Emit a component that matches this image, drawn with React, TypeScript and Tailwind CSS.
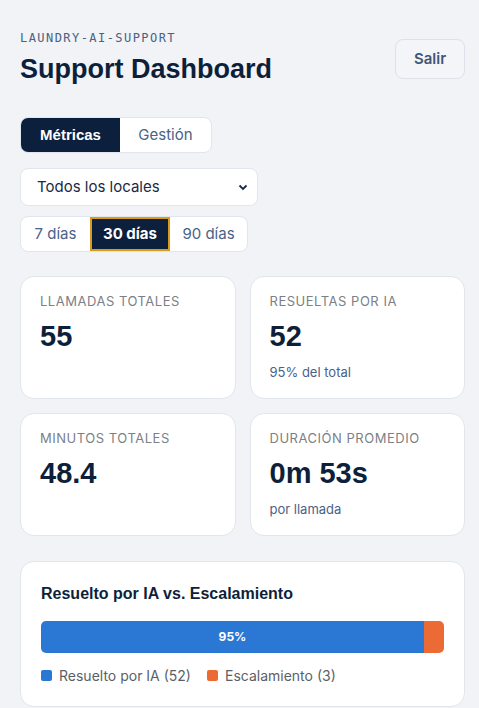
const sans = "font-['Inter','Liberation_Sans',sans-serif]";

interface StatProps {
  label: string;
  value: string;
  sub?: string;
}

const StatCard = ({ label, value, sub }: StatProps) => (
  <div className="bg-white border border-[#e1e5ec] rounded-[14px] h-[123px] px-[19px] pt-[15px]">
    <div className="text-[13px] tracking-[0.04em] text-[#7b7f86] uppercase">{label}</div>
    <div className="mt-[8px] text-[29px] leading-[32px] font-bold text-[#0e1f3a] font-['Liberation_Sans',sans-serif]">{value}</div>
    {sub && <div className="mt-[11px] text-[13px] text-[#4a6287]">{sub}</div>}
  </div>
);

const App = () => {
  return (
    <div className={`min-h-[708px] bg-[#f1f3f7] pl-[20px] pr-[14px] pt-[30px] ${sans}`}>
      <div className="flex justify-between items-start">
        <div>
          <div className="text-[12px] tracking-[0.12em] text-[#4a6180] font-['DejaVu_Sans_Mono',monospace] leading-[16px]">
            LAUNDRY-AI-SUPPORT
          </div>
          <h1 className="mt-[7px] text-[27px] leading-[32px] font-bold text-[#0e1f3a] font-['Liberation_Sans',sans-serif]">
            Support Dashboard
          </h1>
        </div>
        <button className="mt-[9px] w-[70px] h-[40px] rounded-[8px] border border-[#dde2ea] bg-[#f3f5f8] text-[15px] font-semibold text-[#3f5677]">
          Salir
        </button>
      </div>

      <div className="mt-[32px] flex w-[192px] h-[36px] rounded-[8px] border border-[#e1e5ec] bg-white overflow-hidden">
        <button className="w-[99px] bg-[#0c1f3d] text-white text-[15px] font-bold font-['Liberation_Sans',sans-serif]">Métricas</button>
        <button className="flex-1 text-[15px] text-[#4a6287]">Gestión</button>
      </div>

      <div className="mt-[15px] w-[238px] h-[38px] rounded-[8px] border border-[#e1e5ec] bg-white flex items-center justify-between pl-[16px] pr-[8px]">
        <span className="text-[15px] text-[#1a2a44]">Todos los locales</span>
        <svg width="12" height="12" viewBox="0 0 12 12" fill="none" stroke="#1a2a44" strokeWidth="1.8">
          <path d="M2.5 4.5 6 8l3.5-3.5" />
        </svg>
      </div>

      <div className="mt-[10px] flex w-[228px] h-[36px] rounded-[8px] border border-[#e1e5ec] bg-white overflow-hidden">
        <button className="w-[69px] text-[15px] text-[#4a6287]">7 días</button>
        <button className="w-[80px] bg-[#0c1f3d] border-2 border-[#d89b1c] text-white text-[15px] font-bold">30 días</button>
        <button className="flex-1 text-[15px] text-[#4a6287]">90 días</button>
      </div>

      <div className="mt-[24px] grid grid-cols-2 gap-x-[14px] gap-y-[14px]">
        <StatCard label="Llamadas totales" value="55" />
        <StatCard label="Resueltas por IA" value="52" sub="95% del total" />
        <StatCard label="Minutos totales" value="48.4" />
        <StatCard label="Duración promedio" value="0m 53s" sub="por llamada" />
      </div>

      <div className="mt-[25px] bg-white border border-[#e1e5ec] rounded-[14px] px-[20px] pt-[20px] pb-[20px]">
        <div className="text-[16px] font-bold text-[#0e1f3a] font-['Liberation_Sans',sans-serif]">
          Resuelto por IA vs. Escalamiento
        </div>
        <div className="mt-[15px] flex h-[32px] rounded-[5px] overflow-hidden">
          <div className="w-[95%] bg-[#2b78d4] flex items-center justify-center text-white text-[12px] font-bold">95%</div>
          <div className="flex-1 bg-[#ec6a35]"></div>
        </div>
        <div className="mt-[12px] flex items-center gap-[16px] text-[14px] text-[#5c5f66]">
          <div className="flex items-center gap-[7px]">
            <span className="w-[11px] h-[11px] rounded-[2px] bg-[#2b78d4]"></span>
            Resuelto por IA (52)
          </div>
          <div className="flex items-center gap-[7px]">
            <span className="w-[11px] h-[11px] rounded-[2px] bg-[#ec6a35]"></span>
            Escalamiento (3)
          </div>
        </div>
      </div>
    </div>
  );
};

export default App;
